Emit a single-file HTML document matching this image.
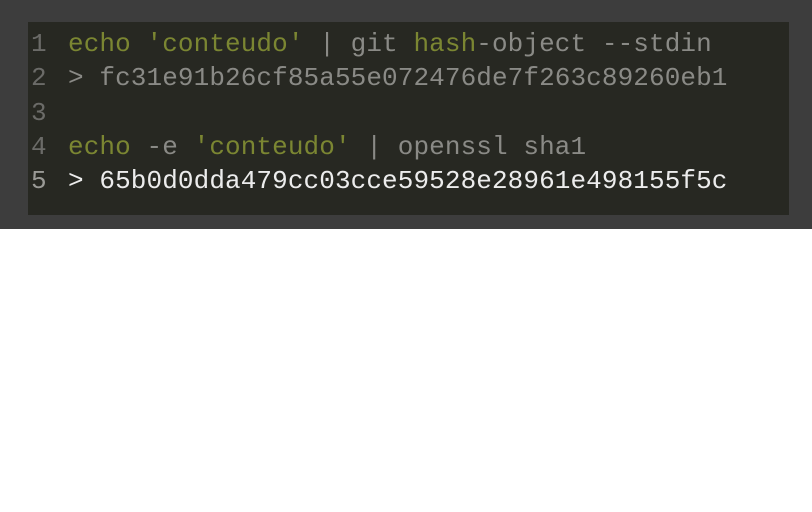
<!DOCTYPE html>
<html><head><style>
body{margin:0;width:812px;height:512px;background:#fff;overflow:hidden}
.band{position:absolute;left:0;top:0;width:812px;height:229px;background:#3d3d3d}
.box{position:absolute;left:28px;top:22px;width:761px;height:193px;background:#272822}
.code,.nums{position:absolute;top:27px;font-family:"Liberation Mono",monospace;font-size:26px;line-height:34.3px;white-space:pre;color:#8a8a86}
.nums{left:31px;color:#6b6b68}
.code{left:68px;letter-spacing:0.1px}
.g{color:#7b8632}.w{color:#ececec}
</style></head><body>
<div class="band"></div><div class="box"></div>
<div class="nums">1
2
3
4
<span style="color:#9a9a96">5</span></div>
<div class="code"><span class="g">echo</span> <span class="g">'conteudo'</span> | git <span class="g">hash</span>-object --stdin
&gt; fc31e91b26cf85a55e072476de7f263c89260eb1

<span class="g">echo</span> -e <span class="g">'conteudo'</span> | openssl sha1
<span class="w">&gt; 65b0d0dda479cc03cce59528e28961e498155f5c</span></div>
</body></html>
